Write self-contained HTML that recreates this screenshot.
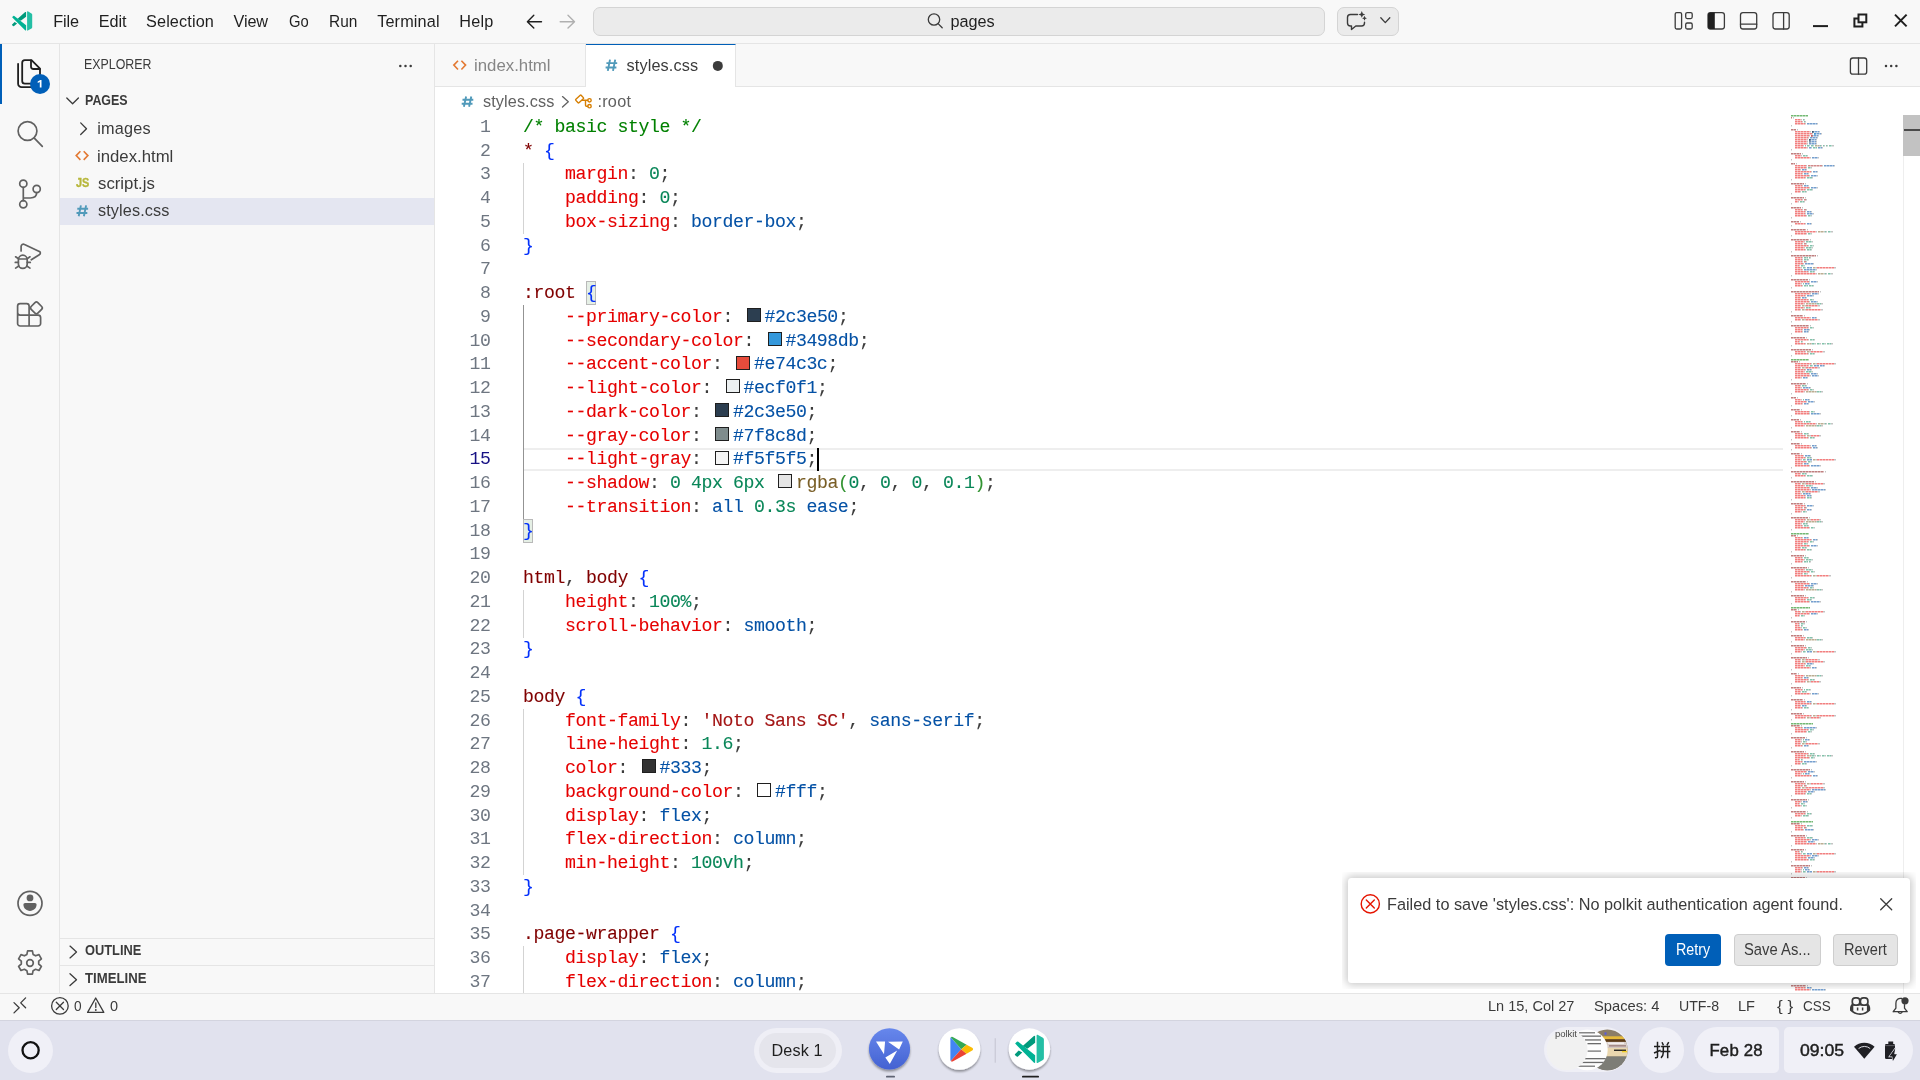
<!DOCTYPE html>
<html><head><meta charset="utf-8"><title>styles.css - pages</title>
<style>
*{margin:0;padding:0;box-sizing:border-box}
html,body{width:1920px;height:1080px;overflow:hidden;background:#fff;font-family:"Liberation Sans",sans-serif}
body{position:relative}
.abs,.t,.ln,.cl,.ig,#ico,.mm{position:absolute}
.t{white-space:pre;line-height:20px;height:20px;transform-origin:0 0}
.lay{left:0;top:0;width:1920px;height:1080px;will-change:transform}
#titlebar{left:0;top:0;width:1920px;height:44px;background:#f8f8f8;border-bottom:1px solid #e5e5e5}
#activity{left:0;top:44px;width:60px;height:949px;background:#f8f8f8;border-right:1px solid #e5e5e5}
#sidebar{left:60px;top:44px;width:375px;height:949px;background:#f8f8f8;border-right:1px solid #e5e5e5}
#tabs{left:435px;top:44px;width:1485px;height:43px;background:#f8f8f8;border-bottom:1px solid #e5e5e5}
#tab1{left:435px;top:44px;width:151px;height:42px;background:#f8f8f8;border-right:1px solid #e5e5e5}
#tab2{left:586px;top:44px;width:150px;height:43px;background:#fff;border-top:1px solid #005fb8;border-right:1px solid #e5e5e5}
#status{left:0;top:993px;width:1920px;height:27px;background:#f8f8f8;border-top:1px solid #e5e5e5}
#shelf{left:0;top:1020px;width:1920px;height:60px;background:#e1e2ee;border-top:1px solid #d3d4df}
#cc{left:593px;top:7px;width:732px;height:29px;background:#ebebeb;border:1px solid #d4d4d4;border-radius:7px}
#cp{left:1337px;top:7px;width:62px;height:29px;background:#ebebeb;border:1px solid #d4d4d4;border-radius:7px}
#sel{left:60px;top:198px;width:374px;height:27px;background:#e4e6f1}
.hr{background:#e5e5e5;height:1px}
.ln{left:435px;width:55.4px;text-align:right;font:18.2px/23.75px "Liberation Mono",monospace;letter-spacing:-0.42px;color:#6e7681;height:23.75px}
.ln.cur{color:#171184}
.cl{left:523px;white-space:pre;font:18.2px/23.75px "Liberation Mono",monospace;letter-spacing:-0.42px;color:#3b3b3b;height:23.75px;-webkit-text-stroke:0.1px}
.cb{display:inline-block;width:14px;height:14px;margin:0 3.5px 0 3.5px;border:1.5px solid #1f1f1f;vertical-align:-0.3px}
.ig{left:523px;width:1px;background:#d3d3d3}
.ig.act{background:#939393}
#curline{left:524px;top:448px;width:1259px;height:23px;border-top:2px solid #eeeeee;border-bottom:2px solid #eeeeee}
#cursor{left:817px;top:448px;width:2px;height:23px;background:#000}
.bm{background:rgba(0,100,0,.1);border:1px solid #b9b9b9;width:10px}
.mm{left:1791px;top:115px}
#sbtrack{left:1903px;top:115px;width:17px;height:878px;border-left:1px solid #eeeeee}
#sbthumb{left:1903px;top:115px;width:17px;height:40.5px;background:#c2c2c2}
#sbmark{left:1904px;top:129px;width:16px;height:2px;background:#4a4a4a}
#nwrap{left:1342px;top:872px;width:574px;height:117px;overflow:hidden}
#notif{left:5.8px;top:6px;width:562.7px;height:105.3px;background:#fff;border-radius:3.5px;box-shadow:0 0 9px 2px rgba(0,0,0,.22)}
.btn{height:32px;border-radius:4px}
</style></head><body>
<div class="abs" id="titlebar"></div>
<div class="abs" id="cc"></div><div class="abs" id="cp"></div>
<div class="abs" id="activity"></div>
<div class="abs" style="left:0;top:44px;width:2px;height:60px;background:#005fb8"></div>
<div class="abs" id="sidebar"></div>
<div class="abs" id="sel"></div>
<div class="abs hr" style="left:60px;top:938px;width:374px"></div>
<div class="abs hr" style="left:60px;top:965px;width:374px"></div>
<div class="abs" id="tabs"></div><div class="abs" id="tab1"></div><div class="abs" id="tab2"></div>
<!-- editor -->
<div class="abs" id="curline"></div>
<div class="abs bm" style="left:586px;top:281px;height:24px"></div>
<div class="abs bm" style="left:523px;top:518.5px;height:24px"></div>
<div class="ig" style="top:162.50px;height:71.25px"></div>
<div class="ig act" style="top:305.00px;height:213.75px"></div>
<div class="ig" style="top:590.00px;height:47.50px"></div>
<div class="ig" style="top:708.75px;height:166.25px"></div>
<div class="ig" style="top:946.25px;height:47.50px"></div>
<div class="abs lay"><div class="ln" style="top:115.75px">1</div><div class="cl" style="top:115.75px"><span style="color:#008000">/* basic style */</span></div>
<div class="ln" style="top:139.50px">2</div><div class="cl" style="top:139.50px"><span style="color:#800000">*</span> <span style="color:#0431fa">{</span></div>
<div class="ln" style="top:163.25px">3</div><div class="cl" style="top:163.25px">    <span style="color:#e50000">margin</span><span style="color:#3b3b3b">:</span> <span style="color:#098658">0</span><span style="color:#3b3b3b">;</span></div>
<div class="ln" style="top:187.00px">4</div><div class="cl" style="top:187.00px">    <span style="color:#e50000">padding</span><span style="color:#3b3b3b">:</span> <span style="color:#098658">0</span><span style="color:#3b3b3b">;</span></div>
<div class="ln" style="top:210.75px">5</div><div class="cl" style="top:210.75px">    <span style="color:#e50000">box-sizing</span><span style="color:#3b3b3b">:</span> <span style="color:#0451a5">border-box</span><span style="color:#3b3b3b">;</span></div>
<div class="ln" style="top:234.50px">6</div><div class="cl" style="top:234.50px"><span style="color:#0431fa">}</span></div>
<div class="ln" style="top:258.25px">7</div><div class="cl" style="top:258.25px"></div>
<div class="ln" style="top:282.00px">8</div><div class="cl" style="top:282.00px"><span style="color:#800000">:root</span> <span style="color:#0431fa">{</span></div>
<div class="ln" style="top:305.75px">9</div><div class="cl" style="top:305.75px">    <span style="color:#e50000">--primary-color</span><span style="color:#3b3b3b">:</span> <i class="cb" style="background:#2c3e50"></i><span style="color:#0451a5">#2c3e50</span><span style="color:#3b3b3b">;</span></div>
<div class="ln" style="top:329.50px">10</div><div class="cl" style="top:329.50px">    <span style="color:#e50000">--secondary-color</span><span style="color:#3b3b3b">:</span> <i class="cb" style="background:#3498db"></i><span style="color:#0451a5">#3498db</span><span style="color:#3b3b3b">;</span></div>
<div class="ln" style="top:353.25px">11</div><div class="cl" style="top:353.25px">    <span style="color:#e50000">--accent-color</span><span style="color:#3b3b3b">:</span> <i class="cb" style="background:#e74c3c"></i><span style="color:#0451a5">#e74c3c</span><span style="color:#3b3b3b">;</span></div>
<div class="ln" style="top:377.00px">12</div><div class="cl" style="top:377.00px">    <span style="color:#e50000">--light-color</span><span style="color:#3b3b3b">:</span> <i class="cb" style="background:#ecf0f1"></i><span style="color:#0451a5">#ecf0f1</span><span style="color:#3b3b3b">;</span></div>
<div class="ln" style="top:400.75px">13</div><div class="cl" style="top:400.75px">    <span style="color:#e50000">--dark-color</span><span style="color:#3b3b3b">:</span> <i class="cb" style="background:#2c3e50"></i><span style="color:#0451a5">#2c3e50</span><span style="color:#3b3b3b">;</span></div>
<div class="ln" style="top:424.50px">14</div><div class="cl" style="top:424.50px">    <span style="color:#e50000">--gray-color</span><span style="color:#3b3b3b">:</span> <i class="cb" style="background:#7f8c8d"></i><span style="color:#0451a5">#7f8c8d</span><span style="color:#3b3b3b">;</span></div>
<div class="ln cur" style="top:448.25px">15</div><div class="cl" style="top:448.25px">    <span style="color:#e50000">--light-gray</span><span style="color:#3b3b3b">:</span> <i class="cb" style="background:#f5f5f5"></i><span style="color:#0451a5">#f5f5f5</span><span style="color:#3b3b3b">;</span></div>
<div class="ln" style="top:472.00px">16</div><div class="cl" style="top:472.00px">    <span style="color:#e50000">--shadow</span><span style="color:#3b3b3b">:</span> <span style="color:#098658">0</span> <span style="color:#098658">4px</span> <span style="color:#098658">6px</span> <i class="cb" style="background:rgba(0,0,0,0.1)"></i><span style="color:#795e26">rgba</span><span style="color:#319331">(</span><span style="color:#098658">0</span><span style="color:#3b3b3b">,</span> <span style="color:#098658">0</span><span style="color:#3b3b3b">,</span> <span style="color:#098658">0</span><span style="color:#3b3b3b">,</span> <span style="color:#098658">0.1</span><span style="color:#319331">)</span><span style="color:#3b3b3b">;</span></div>
<div class="ln" style="top:495.75px">17</div><div class="cl" style="top:495.75px">    <span style="color:#e50000">--transition</span><span style="color:#3b3b3b">:</span> <span style="color:#0451a5">all</span> <span style="color:#098658">0.3s</span> <span style="color:#0451a5">ease</span><span style="color:#3b3b3b">;</span></div>
<div class="ln" style="top:519.50px">18</div><div class="cl" style="top:519.50px"><span style="color:#0431fa">}</span></div>
<div class="ln" style="top:543.25px">19</div><div class="cl" style="top:543.25px"></div>
<div class="ln" style="top:567.00px">20</div><div class="cl" style="top:567.00px"><span style="color:#800000">html</span><span style="color:#3b3b3b">,</span> <span style="color:#800000">body</span> <span style="color:#0431fa">{</span></div>
<div class="ln" style="top:590.75px">21</div><div class="cl" style="top:590.75px">    <span style="color:#e50000">height</span><span style="color:#3b3b3b">:</span> <span style="color:#098658">100%</span><span style="color:#3b3b3b">;</span></div>
<div class="ln" style="top:614.50px">22</div><div class="cl" style="top:614.50px">    <span style="color:#e50000">scroll-behavior</span><span style="color:#3b3b3b">:</span> <span style="color:#0451a5">smooth</span><span style="color:#3b3b3b">;</span></div>
<div class="ln" style="top:638.25px">23</div><div class="cl" style="top:638.25px"><span style="color:#0431fa">}</span></div>
<div class="ln" style="top:662.00px">24</div><div class="cl" style="top:662.00px"></div>
<div class="ln" style="top:685.75px">25</div><div class="cl" style="top:685.75px"><span style="color:#800000">body</span> <span style="color:#0431fa">{</span></div>
<div class="ln" style="top:709.50px">26</div><div class="cl" style="top:709.50px">    <span style="color:#e50000">font-family</span><span style="color:#3b3b3b">:</span> <span style="color:#a31515">&#x27;Noto Sans SC&#x27;</span><span style="color:#3b3b3b">,</span> <span style="color:#0451a5">sans-serif</span><span style="color:#3b3b3b">;</span></div>
<div class="ln" style="top:733.25px">27</div><div class="cl" style="top:733.25px">    <span style="color:#e50000">line-height</span><span style="color:#3b3b3b">:</span> <span style="color:#098658">1.6</span><span style="color:#3b3b3b">;</span></div>
<div class="ln" style="top:757.00px">28</div><div class="cl" style="top:757.00px">    <span style="color:#e50000">color</span><span style="color:#3b3b3b">:</span> <i class="cb" style="background:#333"></i><span style="color:#0451a5">#333</span><span style="color:#3b3b3b">;</span></div>
<div class="ln" style="top:780.75px">29</div><div class="cl" style="top:780.75px">    <span style="color:#e50000">background-color</span><span style="color:#3b3b3b">:</span> <i class="cb" style="background:#fff"></i><span style="color:#0451a5">#fff</span><span style="color:#3b3b3b">;</span></div>
<div class="ln" style="top:804.50px">30</div><div class="cl" style="top:804.50px">    <span style="color:#e50000">display</span><span style="color:#3b3b3b">:</span> <span style="color:#0451a5">flex</span><span style="color:#3b3b3b">;</span></div>
<div class="ln" style="top:828.25px">31</div><div class="cl" style="top:828.25px">    <span style="color:#e50000">flex-direction</span><span style="color:#3b3b3b">:</span> <span style="color:#0451a5">column</span><span style="color:#3b3b3b">;</span></div>
<div class="ln" style="top:852.00px">32</div><div class="cl" style="top:852.00px">    <span style="color:#e50000">min-height</span><span style="color:#3b3b3b">:</span> <span style="color:#098658">100vh</span><span style="color:#3b3b3b">;</span></div>
<div class="ln" style="top:875.75px">33</div><div class="cl" style="top:875.75px"><span style="color:#0431fa">}</span></div>
<div class="ln" style="top:899.50px">34</div><div class="cl" style="top:899.50px"></div>
<div class="ln" style="top:923.25px">35</div><div class="cl" style="top:923.25px"><span style="color:#800000">.page-wrapper</span> <span style="color:#0431fa">{</span></div>
<div class="ln" style="top:947.00px">36</div><div class="cl" style="top:947.00px">    <span style="color:#e50000">display</span><span style="color:#3b3b3b">:</span> <span style="color:#0451a5">flex</span><span style="color:#3b3b3b">;</span></div>
<div class="ln" style="top:970.75px">37</div><div class="cl" style="top:970.75px">    <span style="color:#e50000">flex-direction</span><span style="color:#3b3b3b">:</span> <span style="color:#0451a5">column</span><span style="color:#3b3b3b">;</span></div></div>
<div class="abs" id="cursor"></div>
<svg class="mm" width="120" height="876" viewBox="0 0 120 876"><path d="M0 0.75h17M0 244.75h18M0 418.75h18M0 492.75h19M0 608.75h22M0 706.75h22M0 812.75h21" stroke="#008000" stroke-opacity="0.55" stroke-width="1.5" stroke-dasharray="2.6 0.4" fill="none"/><path d="M0 2.75h1M0 14.75h5M0 38.75h10M0 48.75h4M0 68.75h13M0 82.75h13M0 92.75h10M0 106.75h8M0 114.75h15M0 124.75h18M0 140.75h25M0 164.75h17M0 176.75h28M0 200.75h12M0 210.75h18M0 222.75h14M0 234.75h20M0 246.75h7M0 268.75h15M0 282.75h5M0 294.75h9M0 304.75h8M0 316.75h9M0 328.75h9M0 338.75h9M0 356.75h33M0 366.75h23M0 388.75h12M0 402.75h17M0 420.75h5M0 440.75h13M0 452.75h16M0 466.75h15M0 480.75h13M0 494.75h6M0 506.75h14M0 520.75h11M0 530.75h13M0 542.75h16M0 558.75h6M0 572.75h10M0 584.75h12M0 598.75h11M0 610.75h9M0 622.75h14M0 636.75h13M0 654.75h19M0 666.75h13M0 684.75h16M0 696.75h15M0 708.75h9M0 720.75h14M0 734.75h13M0 750.75h19M0 762.75h14M0 776.75h13M0 786.75h16M0 798.75h14M0 814.75h8M0 830.75h16M0 844.75h13M0 856.75h13M0 870.75h15" stroke="#800000" stroke-opacity="0.5" stroke-width="1.5" stroke-dasharray="2.6 0.4" fill="none"/><path d="M2 2.75h1M10 4.75h1M13 4.75h1M11 6.75h1M14 6.75h1M14 8.75h1M26 8.75h1M0 10.75h1M6 14.75h1M19 16.75h1M28 16.75h1M21 18.75h1M30 18.75h1M18 20.75h1M27 20.75h1M17 22.75h1M26 22.75h1M16 24.75h1M25 24.75h1M16 26.75h1M25 26.75h1M16 28.75h1M25 28.75h1M12 30.75h1M28 30.75h1M30 30.75h1M33 30.75h1M36 30.75h1M41 30.75h1M42 30.75h1M16 32.75h1M31 32.75h1M0 34.75h1M11 38.75h1M10 40.75h1M16 40.75h1M19 42.75h1M27 42.75h1M0 44.75h1M5 48.75h1M15 50.75h1M31 50.75h1M43 50.75h1M15 52.75h1M20 52.75h1M9 54.75h1M15 54.75h1M20 56.75h1M26 56.75h1M11 58.75h1M17 58.75h1M18 60.75h1M26 60.75h1M14 62.75h1M21 62.75h1M0 64.75h1M14 68.75h1M11 70.75h1M17 70.75h1M18 72.75h1M26 72.75h1M14 74.75h1M21 74.75h1M9 76.75h1M15 76.75h1M0 78.75h1M14 82.75h1M11 84.75h1M15 84.75h1M7 86.75h1M13 86.75h1M0 88.75h1M11 92.75h1M11 94.75h1M15 94.75h1M14 96.75h1M20 96.75h1M14 98.75h1M22 98.75h1M15 100.75h1M20 100.75h1M0 102.75h1M9 106.75h1M14 108.75h1M20 108.75h1M0 110.75h1M16 114.75h1M25 116.75h1M33 116.75h1M35 116.75h1M40 116.75h1M41 116.75h1M15 118.75h1M20 118.75h1M0 120.75h1M19 124.75h1M13 126.75h1M21 126.75h1M11 128.75h1M15 128.75h1M17 130.75h1M22 130.75h1M13 132.75h1M21 132.75h1M14 134.75h1M20 134.75h1M0 136.75h1M26 140.75h1M11 142.75h1M19 142.75h1M11 144.75h1M17 144.75h1M11 146.75h1M15 146.75h1M12 148.75h1M22 148.75h1M8 150.75h1M13 150.75h1M10 152.75h1M25 152.75h1M43 152.75h1M44 152.75h1M11 154.75h1M25 154.75h1M17 156.75h1M23 156.75h1M25 158.75h1M33 158.75h1M35 158.75h1M40 158.75h1M41 158.75h1M0 160.75h1M18 164.75h1M18 166.75h1M26 166.75h1M10 168.75h1M18 168.75h1M11 170.75h1M22 170.75h1M0 172.75h1M29 176.75h1M19 178.75h1M27 178.75h1M14 180.75h1M22 180.75h1M9 182.75h1M15 182.75h1M17 184.75h1M22 184.75h1M18 186.75h1M26 186.75h1M13 188.75h1M25 188.75h1M30 188.75h1M31 188.75h1M9 190.75h1M14 190.75h1M27 190.75h1M28 190.75h1M13 192.75h1M19 192.75h1M9 194.75h1M14 194.75h1M30 194.75h1M31 194.75h1M0 196.75h1M13 200.75h1M19 202.75h1M25 202.75h1M9 204.75h1M14 204.75h1M27 204.75h1M28 204.75h1M0 206.75h1M19 210.75h1M17 212.75h1M22 212.75h1M11 214.75h1M18 214.75h1M11 216.75h1M17 216.75h1M0 218.75h1M15 222.75h1M17 224.75h1M23 224.75h1M8 226.75h1M11 226.75h1M14 228.75h1M20 228.75h1M24 228.75h1M29 228.75h1M34 228.75h1M40 228.75h1M41 228.75h1M0 230.75h1M21 234.75h1M14 236.75h1M19 236.75h1M32 236.75h1M33 236.75h1M17 238.75h1M23 238.75h1M0 240.75h1M8 246.75h1M20 248.75h1M25 248.75h1M43 248.75h1M44 248.75h1M17 250.75h1M33 250.75h1M9 252.75h1M14 252.75h1M27 252.75h1M28 252.75h1M14 254.75h1M20 254.75h1M13 256.75h1M21 256.75h1M18 258.75h1M26 258.75h1M19 260.75h1M27 260.75h1M10 262.75h1M16 262.75h1M0 264.75h1M16 268.75h1M9 270.75h1M15 270.75h1M10 272.75h1M19 272.75h1M17 274.75h1M22 274.75h1M13 276.75h1M25 276.75h1M30 276.75h1M31 276.75h1M0 278.75h1M6 282.75h1M10 284.75h1M18 284.75h1M15 286.75h1M23 286.75h1M11 288.75h1M17 288.75h1M0 290.75h1M10 294.75h1M18 296.75h1M23 296.75h1M18 298.75h1M29 298.75h1M0 300.75h1M9 304.75h1M11 306.75h1M19 306.75h1M25 308.75h1M33 308.75h1M35 308.75h1M40 308.75h1M41 308.75h1M13 310.75h1M25 310.75h1M30 310.75h1M31 310.75h1M0 312.75h1M10 316.75h1M11 318.75h1M17 318.75h1M14 320.75h1M19 320.75h1M28 320.75h1M29 320.75h1M17 322.75h1M23 322.75h1M0 324.75h1M10 328.75h1M19 330.75h1M25 330.75h1M20 332.75h1M26 332.75h1M0 334.75h1M10 338.75h1M12 340.75h1M19 340.75h1M14 342.75h1M20 342.75h1M10 344.75h1M25 344.75h1M43 344.75h1M44 344.75h1M15 346.75h1M20 346.75h1M11 348.75h1M17 348.75h1M18 350.75h1M29 350.75h1M0 352.75h1M34 356.75h1M9 358.75h1M15 358.75h1M14 360.75h1M21 360.75h1M0 362.75h1M24 366.75h1M9 368.75h1M14 368.75h1M32 368.75h1M33 368.75h1M13 370.75h1M21 370.75h1M18 372.75h1M26 372.75h1M19 374.75h1M34 374.75h1M9 376.75h1M14 376.75h1M27 376.75h1M28 376.75h1M10 378.75h1M19 378.75h1M14 380.75h1M20 380.75h1M14 382.75h1M20 382.75h1M0 384.75h1M13 388.75h1M14 390.75h1M22 390.75h1M11 392.75h1M15 392.75h1M14 394.75h1M20 394.75h1M10 396.75h1M15 396.75h1M0 398.75h1M18 402.75h1M14 404.75h1M19 404.75h1M28 404.75h1M29 404.75h1M13 406.75h1M25 406.75h1M30 406.75h1M31 406.75h1M10 408.75h1M16 408.75h1M11 410.75h1M17 410.75h1M18 412.75h1M23 412.75h1M0 414.75h1M6 420.75h1M11 422.75h1M17 422.75h1M20 424.75h1M26 424.75h1M17 426.75h1M22 426.75h1M11 428.75h1M16 428.75h1M18 430.75h1M26 430.75h1M9 432.75h1M15 432.75h1M14 434.75h1M20 434.75h1M0 436.75h1M14 440.75h1M11 442.75h1M17 442.75h1M13 444.75h1M21 444.75h1M11 446.75h1M19 446.75h1M0 448.75h1M17 452.75h1M13 454.75h1M21 454.75h1M18 456.75h1M23 456.75h1M11 458.75h1M16 458.75h1M20 460.75h1M25 460.75h1M38 460.75h1M39 460.75h1M0 462.75h1M16 466.75h1M18 468.75h1M26 468.75h1M12 470.75h1M22 470.75h1M17 472.75h1M22 472.75h1M13 474.75h1M25 474.75h1M30 474.75h1M31 474.75h1M0 476.75h1M14 480.75h1M17 482.75h1M23 482.75h1M14 484.75h1M20 484.75h1M18 486.75h1M29 486.75h1M0 488.75h1M7 494.75h1M9 496.75h1M14 496.75h1M32 496.75h1M33 496.75h1M18 498.75h1M26 498.75h1M8 500.75h1M13 500.75h1M0 502.75h1M15 506.75h1M8 508.75h1M13 508.75h1M8 510.75h1M11 510.75h1M10 512.75h1M15 512.75h1M11 514.75h1M17 514.75h1M0 516.75h1M12 520.75h1M14 522.75h1M21 522.75h1M13 524.75h1M25 524.75h1M30 524.75h1M31 524.75h1M0 526.75h1M14 530.75h1M15 532.75h1M20 532.75h1M13 534.75h1M21 534.75h1M10 536.75h1M25 536.75h1M43 536.75h1M44 536.75h1M0 538.75h1M17 542.75h1M9 544.75h1M14 544.75h1M27 544.75h1M28 544.75h1M9 546.75h1M14 546.75h1M32 546.75h1M33 546.75h1M14 548.75h1M22 548.75h1M13 550.75h1M19 550.75h1M19 552.75h1M25 552.75h1M0 554.75h1M7 558.75h1M13 560.75h1M25 560.75h1M30 560.75h1M31 560.75h1M11 562.75h1M17 562.75h1M17 564.75h1M23 564.75h1M14 566.75h1M19 566.75h1M28 566.75h1M29 566.75h1M0 568.75h1M11 572.75h1M11 574.75h1M19 574.75h1M9 576.75h1M15 576.75h1M19 578.75h1M27 578.75h1M0 580.75h1M13 584.75h1M14 586.75h1M20 586.75h1M20 588.75h1M25 588.75h1M43 588.75h1M44 588.75h1M9 590.75h1M15 590.75h1M11 592.75h1M17 592.75h1M0 594.75h1M12 598.75h1M20 600.75h1M25 600.75h1M43 600.75h1M44 600.75h1M14 602.75h1M19 602.75h1M28 602.75h1M29 602.75h1M0 604.75h1M10 610.75h1M11 612.75h1M25 612.75h1M17 614.75h1M22 614.75h1M15 616.75h1M20 616.75h1M0 618.75h1M15 622.75h1M10 624.75h1M18 624.75h1M10 626.75h1M15 626.75h1M9 628.75h1M14 628.75h1M27 628.75h1M28 628.75h1M11 630.75h1M17 630.75h1M0 632.75h1M14 636.75h1M17 638.75h1M23 638.75h1M14 640.75h1M20 640.75h1M24 640.75h1M29 640.75h1M34 640.75h1M40 640.75h1M41 640.75h1M18 642.75h1M23 642.75h1M8 644.75h1M11 644.75h1M11 646.75h1M25 646.75h1M9 648.75h1M15 648.75h1M0 650.75h1M20 654.75h1M15 656.75h1M23 656.75h1M10 658.75h1M18 658.75h1M20 660.75h1M26 660.75h1M0 662.75h1M14 666.75h1M14 668.75h1M19 668.75h1M32 668.75h1M33 668.75h1M11 670.75h1M15 670.75h1M9 672.75h1M14 672.75h1M32 672.75h1M33 672.75h1M19 674.75h1M34 674.75h1M15 676.75h1M23 676.75h1M14 678.75h1M20 678.75h1M0 680.75h1M17 684.75h1M10 686.75h1M16 686.75h1M8 688.75h1M13 688.75h1M10 690.75h1M15 690.75h1M0 692.75h1M16 696.75h1M14 698.75h1M20 698.75h1M10 700.75h1M17 700.75h1M0 702.75h1M10 708.75h1M14 710.75h1M21 710.75h1M11 712.75h1M15 712.75h1M12 714.75h1M22 714.75h1M0 716.75h1M15 720.75h1M14 722.75h1M21 722.75h1M19 724.75h1M27 724.75h1M15 726.75h1M23 726.75h1M25 728.75h1M33 728.75h1M35 728.75h1M40 728.75h1M41 728.75h1M0 730.75h1M14 734.75h1M8 736.75h1M11 736.75h1M10 738.75h1M25 738.75h1M43 738.75h1M44 738.75h1M19 740.75h1M27 740.75h1M15 742.75h1M23 742.75h1M17 744.75h1M23 744.75h1M0 746.75h1M20 750.75h1M11 752.75h1M17 752.75h1M10 754.75h1M18 754.75h1M10 756.75h1M25 756.75h1M43 756.75h1M44 756.75h1M0 758.75h1M15 762.75h1M17 764.75h1M33 764.75h1M14 766.75h1M21 766.75h1M17 768.75h1M23 768.75h1M11 770.75h1M15 770.75h1M0 772.75h1M14 776.75h1M8 778.75h1M13 778.75h1M11 780.75h1M19 780.75h1M0 782.75h1M17 786.75h1M10 788.75h1M15 788.75h1M12 790.75h1M19 790.75h1M8 792.75h1M11 792.75h1M0 794.75h1M15 798.75h1M17 800.75h1M23 800.75h1M25 802.75h1M33 802.75h1M35 802.75h1M40 802.75h1M41 802.75h1M17 804.75h1M23 804.75h1M14 806.75h1M19 806.75h1M28 806.75h1M29 806.75h1M0 808.75h1M9 814.75h1M19 816.75h1M34 816.75h1M11 818.75h1M18 818.75h1M18 820.75h1M26 820.75h1M13 822.75h1M25 822.75h1M30 822.75h1M31 822.75h1M17 824.75h1M23 824.75h1M0 826.75h1M17 830.75h1M17 832.75h1M23 832.75h1M14 834.75h1M20 834.75h1M10 836.75h1M16 836.75h1M20 838.75h1M25 838.75h1M43 838.75h1M44 838.75h1M0 840.75h1M14 844.75h1M14 846.75h1M19 846.75h1M28 846.75h1M29 846.75h1M12 848.75h1M22 848.75h1M13 850.75h1M25 850.75h1M30 850.75h1M31 850.75h1M0 852.75h1M14 856.75h1M8 858.75h1M11 858.75h1M11 860.75h1M16 860.75h1M7 862.75h1M13 862.75h1M17 864.75h1M23 864.75h1M0 866.75h1M16 870.75h1M14 872.75h1M20 872.75h1M19 874.75h1M34 874.75h1" stroke="#3b3b3b" stroke-opacity="0.3" stroke-width="1.5" stroke-dasharray="2.6 0.4" fill="none"/><path d="M4 4.75h6M4 6.75h7M4 8.75h10M4 16.75h15M4 18.75h17M4 20.75h14M4 22.75h13M4 24.75h12M4 26.75h12M4 28.75h12M4 30.75h8M4 32.75h12M4 40.75h6M4 42.75h15M4 50.75h11M4 52.75h11M4 54.75h5M4 56.75h16M4 58.75h7M4 60.75h14M4 62.75h10M4 70.75h7M4 72.75h14M4 74.75h10M4 76.75h5M4 84.75h7M4 86.75h3M4 94.75h7M4 96.75h10M4 98.75h10M4 100.75h11M4 108.75h10M4 116.75h21M4 118.75h11M4 126.75h9M4 128.75h7M4 130.75h13M4 132.75h9M4 134.75h10M4 142.75h7M4 144.75h7M4 146.75h7M4 148.75h8M4 150.75h4M4 152.75h6M26 152.75h17M4 154.75h7M4 156.75h13M4 158.75h21M4 166.75h14M4 168.75h6M4 170.75h7M4 178.75h15M4 180.75h10M4 182.75h5M4 184.75h13M4 186.75h14M4 188.75h9M4 190.75h5M15 190.75h12M4 192.75h9M4 194.75h5M15 194.75h15M4 202.75h15M4 204.75h5M15 204.75h12M4 212.75h13M4 214.75h7M4 216.75h7M4 224.75h13M4 226.75h4M4 228.75h10M4 236.75h10M20 236.75h12M4 238.75h13M4 248.75h16M26 248.75h17M4 250.75h13M4 252.75h5M15 252.75h12M4 254.75h10M4 256.75h9M4 258.75h14M4 260.75h15M4 262.75h6M4 270.75h5M4 272.75h6M4 274.75h13M4 276.75h9M4 284.75h6M4 286.75h11M4 288.75h7M4 296.75h14M4 298.75h14M4 306.75h7M4 308.75h21M4 310.75h9M4 318.75h7M4 320.75h10M20 320.75h8M4 322.75h13M4 330.75h15M4 332.75h16M4 340.75h8M4 342.75h10M4 344.75h6M26 344.75h17M4 346.75h11M4 348.75h7M4 350.75h14M4 358.75h5M4 360.75h10M4 368.75h5M15 368.75h17M4 370.75h9M4 372.75h14M4 374.75h15M4 376.75h5M15 376.75h12M4 378.75h6M4 380.75h10M4 382.75h10M4 390.75h10M4 392.75h7M4 394.75h10M4 396.75h6M4 404.75h10M20 404.75h8M4 406.75h9M4 408.75h6M4 410.75h7M4 412.75h14M4 422.75h7M4 424.75h16M4 426.75h13M4 428.75h7M4 430.75h14M4 432.75h5M4 434.75h10M4 442.75h7M4 444.75h9M4 446.75h7M4 454.75h9M4 456.75h14M4 458.75h7M4 460.75h16M26 460.75h12M4 468.75h14M4 470.75h8M4 472.75h13M4 474.75h9M4 482.75h13M4 484.75h10M4 486.75h14M4 496.75h5M15 496.75h17M4 498.75h14M4 500.75h4M4 508.75h4M4 510.75h4M4 512.75h6M4 514.75h7M4 522.75h10M4 524.75h9M4 532.75h11M4 534.75h9M4 536.75h6M26 536.75h17M4 544.75h5M15 544.75h12M4 546.75h5M15 546.75h17M4 548.75h10M4 550.75h9M4 552.75h15M4 560.75h9M4 562.75h7M4 564.75h13M4 566.75h10M20 566.75h8M4 574.75h7M4 576.75h5M4 578.75h15M4 586.75h10M4 588.75h16M26 588.75h17M4 590.75h5M4 592.75h7M4 600.75h16M26 600.75h17M4 602.75h10M20 602.75h8M4 612.75h7M4 614.75h13M4 616.75h11M4 624.75h6M4 626.75h6M4 628.75h5M15 628.75h12M4 630.75h7M4 638.75h13M4 640.75h10M4 642.75h14M4 644.75h4M4 646.75h7M4 648.75h5M4 656.75h11M4 658.75h6M4 660.75h16M4 668.75h10M20 668.75h12M4 670.75h7M4 672.75h5M15 672.75h17M4 674.75h15M4 676.75h11M4 678.75h10M4 686.75h6M4 688.75h4M4 690.75h6M4 698.75h10M4 700.75h6M4 710.75h10M4 712.75h7M4 714.75h8M4 722.75h10M4 724.75h15M4 726.75h11M4 728.75h21M4 736.75h4M4 738.75h6M26 738.75h17M4 740.75h15M4 742.75h11M4 744.75h13M4 752.75h7M4 754.75h6M4 756.75h6M26 756.75h17M4 764.75h13M4 766.75h10M4 768.75h13M4 770.75h7M4 778.75h4M4 780.75h7M4 788.75h6M4 790.75h8M4 792.75h4M4 800.75h13M4 802.75h21M4 804.75h13M4 806.75h10M20 806.75h8M4 816.75h15M4 818.75h7M4 820.75h14M4 822.75h9M4 824.75h13M4 832.75h13M4 834.75h10M4 836.75h6M4 838.75h16M26 838.75h17M4 846.75h10M20 846.75h8M4 848.75h8M4 850.75h9M4 858.75h4M4 860.75h7M4 862.75h3M4 864.75h13M4 872.75h10M4 874.75h15" stroke="#e50000" stroke-opacity="0.5" stroke-width="1.5" stroke-dasharray="2.6 0.4" fill="none"/><path d="M12 4.75h1M13 6.75h1M14 30.75h1M16 30.75h3M20 30.75h3M29 30.75h1M32 30.75h1M35 30.75h1M38 30.75h3M22 32.75h4M12 40.75h4M17 52.75h3M16 62.75h5M16 74.75h5M11 76.75h4M9 86.75h4M17 100.75h3M34 116.75h1M37 116.75h3M17 118.75h3M15 126.75h6M19 130.75h3M15 132.75h6M16 134.75h4M13 142.75h4M18 142.75h1M13 144.75h4M10 150.75h3M12 152.75h3M19 156.75h4M34 158.75h1M37 158.75h3M12 168.75h1M13 170.75h4M18 170.75h4M19 184.75h3M26 188.75h4M15 192.75h4M19 212.75h3M19 224.75h4M10 226.75h1M21 228.75h3M26 228.75h3M31 228.75h3M36 228.75h4M19 238.75h4M19 250.75h3M15 256.75h6M11 270.75h4M19 274.75h3M26 276.75h4M12 284.75h1M20 296.75h3M13 306.75h1M15 306.75h4M34 308.75h1M37 308.75h3M26 310.75h4M13 318.75h4M19 322.75h4M16 342.75h4M12 344.75h3M17 346.75h3M11 358.75h4M16 360.75h5M15 370.75h6M16 382.75h4M12 396.75h3M26 406.75h4M12 408.75h4M13 410.75h4M20 412.75h3M19 426.75h3M13 428.75h3M11 432.75h4M16 434.75h4M13 442.75h4M15 444.75h6M13 446.75h4M18 446.75h1M15 454.75h6M20 456.75h3M13 458.75h3M19 472.75h3M26 474.75h4M19 482.75h4M16 484.75h4M10 500.75h3M10 508.75h3M10 510.75h1M12 512.75h3M16 522.75h5M26 524.75h4M17 532.75h3M15 534.75h6M12 536.75h3M15 550.75h4M26 560.75h4M19 564.75h4M13 574.75h1M15 574.75h4M11 576.75h4M13 592.75h4M19 614.75h3M17 616.75h3M12 624.75h1M12 626.75h3M19 638.75h4M21 640.75h3M26 640.75h3M31 640.75h3M36 640.75h4M20 642.75h3M10 644.75h1M11 648.75h4M12 658.75h1M16 678.75h4M10 688.75h3M12 690.75h3M16 698.75h4M12 700.75h5M16 710.75h5M16 722.75h5M34 728.75h1M37 728.75h3M10 736.75h1M12 738.75h3M19 744.75h4M12 754.75h1M12 756.75h3M19 764.75h3M16 766.75h5M19 768.75h4M10 778.75h3M13 780.75h4M18 780.75h1M12 788.75h3M10 792.75h1M19 800.75h4M34 802.75h1M37 802.75h3M19 804.75h4M26 822.75h4M19 824.75h4M19 832.75h4M16 834.75h4M12 836.75h4M26 850.75h4M10 858.75h1M13 860.75h3M9 862.75h4M19 864.75h4" stroke="#098658" stroke-opacity="0.5" stroke-width="1.5" stroke-dasharray="2.6 0.4" fill="none"/><path d="M16 8.75h10M21 16.75h7M23 18.75h7M20 20.75h7M19 22.75h7M18 24.75h7M18 26.75h7M18 28.75h7M18 32.75h3M27 32.75h4M21 42.75h6M33 50.75h10M11 54.75h4M22 56.75h4M13 58.75h4M20 60.75h6M13 70.75h4M20 72.75h6M16 96.75h4M16 98.75h6M16 108.75h4M14 148.75h8M16 152.75h5M13 154.75h12M20 166.75h6M14 168.75h4M21 178.75h6M16 180.75h6M11 182.75h4M20 186.75h6M21 202.75h4M13 214.75h5M13 216.75h4M23 250.75h5M29 250.75h4M16 254.75h4M20 258.75h6M21 260.75h6M12 262.75h4M12 272.75h7M14 284.75h4M17 286.75h6M13 288.75h4M20 298.75h9M21 330.75h4M22 332.75h4M14 340.75h5M16 344.75h5M13 348.75h4M20 350.75h9M20 372.75h6M21 374.75h13M12 378.75h7M16 380.75h4M16 390.75h6M16 394.75h4M13 422.75h4M22 424.75h4M20 430.75h6M20 468.75h6M14 470.75h8M20 486.75h9M20 498.75h6M13 514.75h4M16 536.75h5M16 548.75h6M21 552.75h4M13 562.75h4M21 578.75h6M16 586.75h4M11 590.75h4M13 612.75h12M14 624.75h4M13 630.75h4M13 646.75h12M17 656.75h6M14 658.75h4M22 660.75h4M21 674.75h13M17 676.75h6M12 686.75h4M14 714.75h8M21 724.75h6M17 726.75h6M16 738.75h5M21 740.75h6M17 742.75h6M13 752.75h4M14 754.75h4M16 756.75h5M23 764.75h5M29 764.75h4M14 790.75h5M21 816.75h13M13 818.75h5M20 820.75h6M14 848.75h8M16 872.75h4M21 874.75h13" stroke="#0451a5" stroke-opacity="0.55" stroke-width="1.5" stroke-dasharray="2.6 0.4" fill="none"/><path d="M24 30.75h4M27 116.75h6M22 152.75h3M27 158.75h6M15 188.75h10M11 190.75h3M11 194.75h3M11 204.75h3M16 228.75h4M16 236.75h3M22 248.75h3M11 252.75h3M15 276.75h10M27 308.75h6M15 310.75h10M16 320.75h3M22 344.75h3M11 368.75h3M11 376.75h3M16 404.75h3M15 406.75h10M22 460.75h3M15 474.75h10M11 496.75h3M15 524.75h10M22 536.75h3M11 544.75h3M11 546.75h3M15 560.75h10M16 566.75h3M22 588.75h3M22 600.75h3M16 602.75h3M11 628.75h3M16 640.75h4M16 668.75h3M11 672.75h3M27 728.75h6M22 738.75h3M22 756.75h3M27 802.75h6M16 806.75h3M15 822.75h10M22 838.75h3M16 846.75h3M15 850.75h10" stroke="#795e26" stroke-opacity="0.5" stroke-width="1.5" stroke-dasharray="2.6 0.4" fill="none"/><path d="M17 50.75h14M13 84.75h2M13 94.75h2M13 128.75h2M13 146.75h2M13 392.75h2M13 670.75h2M13 712.75h2M13 770.75h2" stroke="#a31515" stroke-opacity="0.5" stroke-width="1.5" stroke-dasharray="2.6 0.4" fill="none"/><rect x="21" y="16" width="1.6" height="1.8" fill="#2c3e50" fill-opacity=".8"/><rect x="23" y="18" width="1.6" height="1.8" fill="#3498db" fill-opacity=".8"/><rect x="20" y="20" width="1.6" height="1.8" fill="#e74c3c" fill-opacity=".8"/><rect x="18" y="24" width="1.6" height="1.8" fill="#2c3e50" fill-opacity=".8"/><rect x="18" y="26" width="1.6" height="1.8" fill="#7f8c8d" fill-opacity=".8"/></svg>
<div class="abs" id="sbtrack"></div><div class="abs" id="sbthumb"></div><div class="abs" id="sbmark"></div>
<div class="abs" id="status"></div>
<div class="abs" id="nwrap"><div class="abs" id="notif"></div></div>
<div class="abs btn" style="left:1665px;top:934px;width:56px;background:#005fb8"></div>
<div class="abs btn" style="left:1734px;top:934px;width:87px;background:#e5e5e5;border:1px solid #cecece"></div>
<div class="abs btn" style="left:1833px;top:934px;width:65px;background:#e5e5e5;border:1px solid #cecece"></div>
<div class="abs" id="shelf"></div>
<!-- shelf items -->
<div class="abs" style="left:8px;top:1028px;width:45px;height:45px;border-radius:50%;background:#f0f0f7"></div>
<div class="abs" style="left:754px;top:1028px;width:88px;height:45px;border-radius:23px;background:#efeff6"></div>
<div class="abs" style="left:759px;top:1033px;width:77px;height:35px;border-radius:18px;background:#e5e5ec"></div>
<div class="abs" style="left:1543.7px;top:1027.3px;width:84.3px;height:45px;border-radius:22.5px;background:#efeff6"></div>
<div class="abs" style="left:1639px;top:1027.3px;width:45.4px;height:45.4px;border-radius:50%;background:#f0f0f7"></div>
<div class="abs" style="left:1694.3px;top:1027.3px;width:84.800px;height:45.400px;border-radius:23px 5px 5px 23px;background:#f0f0f7"></div>
<div class="abs" style="left:1783.8px;top:1027.3px;width:129.300px;height:45.400px;border-radius:5px 23px 23px 5px;background:#f0f0f7"></div>
<svg id="ico" width="1920" height="1080" viewBox="0 0 1920 1080" fill="none" stroke-linecap="round" stroke-linejoin="round">
<!-- vscode logo title -->
<g stroke="none">
<path fill="#009a7c" d="M17.400 18.900L25.200 12.100a.6.600 0 0 1 .9.200L26.100 16.800L20.700 20.800zM12.100 24.400L14.600 22L17.100 23.400L14.100 26.100a.700.700 0 0 1-.9 0L12.100 25.200a.550.550 0 0 1 0-.8z"/>
<path fill="#00b294" d="M12.100 17.300L13.300 16.100a.800.800 0 0 1 1-.100L26.100 25.200V30a.500.500 0 0 1-.8.400z"/>
<path fill="#24bfa5" d="M27.100 11.800a.500.500 0 0 1 .7-.450L31.500 13.400a1.300 1.300 0 0 1 .7 1.150V27.350a1.300 1.300 0 0 1-.7 1.150L27.800 30.550a.500.500 0 0 1-.700-.450z"/>
</g>
<!-- nav arrows -->
<g stroke="#1f1f1f" stroke-width="1.4"><path d="M541.5 21.7H527.6M533.8 15.3L527.4 21.7L533.8 28.1"/></g>
<g stroke="#b0b0b0" stroke-width="1.4"><path d="M560.2 21.7H574.3M568 15.3L574.5 21.7L568 28.1"/></g>
<!-- search in command center -->
<g stroke="#3b3b3b" stroke-width="1.3"><circle cx="934" cy="19.500" r="5.700"/><path d="M938.100 23.600L942.200 27.800"/></g>
<!-- copilot chat icon -->
<g stroke="#3b3b3b" stroke-width="1.4"><path d="M1357.5 14.5H1350.5a3 3 0 0 0-3 3V23a3 3 0 0 0 3 3h1v3.5l4.3-3.5h5.7a3 3 0 0 0 3-3v-0.8"/></g>
<g fill="#3b3b3b" stroke="none"><path d="M1361.800 11l1 2.400 2.400 1-2.400 1-1 2.400-1-2.400-2.400-1 2.400-1z"/><path d="M1364.500 15.800l.750 1.700 1.700.750-1.700.750-.750 1.700-.750-1.700-1.700-.750 1.700-.750z"/></g>
<g stroke="#3b3b3b" stroke-width="1.3"><path d="M1380.8 17.8L1385.3 22.6L1389.8 17.8"/></g>
<!-- layout icons -->
<g stroke="#3b3b3b" stroke-width="1.3">
<rect x="1675.2" y="12.6" width="6.4" height="16.4" rx="1.5"/><rect x="1685.7" y="12.6" width="6.5" height="6" rx="1.5"/><rect x="1685.7" y="23" width="6.5" height="6" rx="1.5"/>
<rect x="1708" y="12.6" width="16.4" height="16.4" rx="2.5"/>
<rect x="1740.5" y="12.6" width="16.2" height="16.4" rx="2.5"/><path d="M1740.5 24.2H1756.7"/>
<rect x="1773" y="12.6" width="16.2" height="16.4" rx="2.5"/><path d="M1783.6 12.6V29"/>
</g>
<path d="M1710.5 12.6H1714.8V29H1710.5a2.5 2.5 0 0 1-2.5-2.5V15.1a2.5 2.5 0 0 1 2.5-2.5z" fill="#1f1f1f" stroke="none"/>
<!-- window controls -->
<g stroke="#1f1f1f" stroke-width="2" stroke-linecap="butt" stroke-linejoin="miter"><path d="M1813 26.1H1828"/><rect x="1858.5" y="14.5" width="7.8" height="7.8"/><path d="M1858.5 18.5H1854.4V26.4H1862.4V22.3"/><path d="M1895 14.6L1906.6 26.4M1906.6 14.6L1895 26.4"/></g>
<!-- editor actions -->
<g stroke="#3b3b3b" stroke-width="1.3"><rect x="1850.4" y="58" width="16.3" height="16.2" rx="2.5"/><path d="M1858.5 58V74.2"/></g>
<g fill="#3b3b3b" stroke="none"><circle cx="1886" cy="66" r="1.25"/><circle cx="1891.2" cy="66" r="1.25"/><circle cx="1896.4" cy="66" r="1.25"/>
<circle cx="400.300" cy="66" r="1.250"/><circle cx="405.500" cy="66" r="1.250"/><circle cx="410.700" cy="66" r="1.250"/></g>
<!-- activity: files -->
<g stroke="#1f1f1f" stroke-width="1.8"><path d="M24.8 60.2H31.5L40 68.7V81a2.6 2.6 0 0 1-2.6 2.6H24.8a2.6 2.6 0 0 1-2.6-2.6V62.8a2.6 2.6 0 0 1 2.6-2.6z"/><path d="M31 60.4V66.5a2.5 2.5 0 0 0 2.500 2.500H39.800"/><path d="M18.100 63.800V83.700a3.500 3.500 0 0 0 3.500 3.500H31"/></g>
<circle cx="40" cy="84" r="10" fill="#005fb8" stroke="none"/>
<!-- search -->
<g stroke="#616161" stroke-width="1.7"><circle cx="27.5" cy="131" r="9.4"/><path d="M34.3 138.100L42.300 146.300"/></g>
<!-- scm -->
<g stroke="#616161" stroke-width="1.7"><circle cx="23.3" cy="183.700" r="3.600"/><circle cx="23.3" cy="204.300" r="3.600"/><circle cx="36.700" cy="189" r="3.600"/><path d="M23.3 187.300V200.700M36.700 192.600c0 3.800-2.600 5.400-6.400 5.400H23.300"/></g>
<!-- debug -->
<g stroke="#616161" stroke-width="1.7"><path d="M21.100 251V246.500a2.300 2.300 0 0 1 3.400-2L39.300 251.400a1.800 1.800 0 0 1 0 3.300L31.300 259.800"/><rect x="18.400" y="255.200" width="8.800" height="13.200" rx="4.400"/><path d="M18.800 259H26.800M15.600 256.800L18.500 258.800M15.300 262.400H18.300M15.600 268.100L18.800 266M30 256.800L27.100 258.800M30.300 262.400H27.300M30 268.100L26.800 266"/></g>
<!-- extensions -->
<g stroke="#616161" stroke-width="1.7"><path d="M29.100 315.100H20.100a2.500 2.500 0 0 1-2.500-2.500V306.100a2.500 2.500 0 0 1 2.500-2.500H26.600a2.500 2.500 0 0 1 2.500 2.500V326M17.600 312V323.500a2.500 2.500 0 0 0 2.500 2.500H38.100a2.500 2.500 0 0 0 2.500-2.500V317.600a2.500 2.500 0 0 0-2.500-2.500H29.100"/><rect x="31.700" y="303.200" width="9.400" height="9.400" rx="2" transform="rotate(45 36.400 307.900)"/></g>
<!-- account -->
<g stroke="#616161" stroke-width="1.7"><circle cx="30" cy="903.300" r="12"/></g>
<g fill="#616161" stroke="none"><circle cx="30" cy="897.900" r="3.400"/><path d="M23.400 904.600a1.700 1.700 0 0 1 1.700-1.700H34.900a1.700 1.700 0 0 1 1.700 1.700c0 3.800-3 6.300-6.600 6.300s-6.600-2.500-6.600-6.300z"/></g>
<!-- sidebar chevrons -->
<g stroke="#3b3b3b" stroke-width="1.3"><path d="M66.800 98L72.600 103.800L78.400 98"/><path d="M80.700 122.900L86.500 128.700L80.700 134.500"/><path d="M70 946.100L76.500 952L70 957.900"/><path d="M70 973.800L76.500 979.700L70 985.600"/></g>
<!-- file icons -->
<g stroke="#e37933" stroke-width="1.6" stroke-linecap="butt" stroke-linejoin="miter"><path d="M80.400 151.300L76.200 155.600L80.400 159.900M83.700 151.300L87.900 155.600L83.700 159.900"/><path d="M458 60.700L453.800 65.100L458 69.500M461.400 60.700L465.600 65.100L461.400 69.500"/></g>
<g stroke="#519aba" stroke-width="1.9" stroke-linecap="butt">
<path d="M80.900 205.400L78.700 216.300M86.100 205.400L83.900 216.300M77.300 208.700H88.100M76.500 213H87.300"/>
<path d="M610 59.600L607.800 70.900M615.200 59.600L613 70.900M606.400 63.100H617.200M605.600 67.500H616.400"/>
<path d="M466.100 96.500L463.900 106.800M471.300 96.500L469.100 106.800M462.500 99.700H473.300M461.700 103.700H472.500"/>
</g>
<!-- tab dirty dot -->
<circle cx="717.800" cy="65.900" r="5" fill="#3b3b3b" stroke="none"/>
<!-- breadcrumb chevron + symbol -->
<g stroke="#616161" stroke-width="1.3"><path d="M562.500 96.600L568.300 101.800L562.500 107"/></g>
<g stroke="#d67e00" stroke-width="1.4"><rect x="577.300" y="95.300" width="4.600" height="7.400" rx="0.800" transform="rotate(48 579.600 99)"/><path d="M582.200 100.300H585.500M585.500 100.300V105.200a1 1 0 0 0 1 1H587.800M585.500 100.300H587.800"/><circle cx="589.500" cy="100.300" r="1.700"/><circle cx="589.500" cy="106.200" r="1.700"/></g>
<!-- gear -->
<g stroke="#616161" stroke-width="1.7"><circle cx="30" cy="963" r="3.300"/><path d="M27.600 950.900h4.800l.7 3.500 2.500 1.400 3.400-1.200 2.400 4.200-2.700 2.300v2.900l2.700 2.300-2.400 4.200-3.400-1.200-2.500 1.400-.7 3.500h-4.800l-.7-3.500-2.500-1.400-3.400 1.200-2.400-4.200 2.700-2.300v-2.900l-2.700-2.300 2.400-4.200 3.400 1.200 2.500-1.400z"/></g>
<!-- status bar left -->
<g stroke="#3b3b3b" stroke-width="1.3"><path d="M14 1002.600L19.200 1007.700L14 1012.900M25.600 997.900L20.700 1002.900L25.600 1007.800"/><circle cx="59.900" cy="1005.900" r="8.300"/><path d="M56.300 1002.300L63.500 1009.500M63.500 1002.300L56.300 1009.500"/><path d="M95.700 998L103.800 1012.400H87.600z"/><path d="M95.800 1003V1007.500"/></g>
<circle cx="95.800" cy="1010" r="0.900" fill="#3b3b3b" stroke="none"/>
<!-- status right: copilot + bell -->
<g stroke="none">
<path fill="#3b3b3b" d="M1850 1008.200c0-2 1-3.600 2.600-4.600h15c1.600 1 2.600 2.600 2.600 4.600v2.400c-2.500 2.800-6 4.300-10.100 4.300s-7.600-1.500-10.100-4.300z"/>
<path fill="#f8f8f8" d="M1853.300 1005.600h13.600v5.300c-2 1.500-4.200 2.300-6.800 2.300s-4.800-.8-6.800-2.300z"/>
<rect x="1852.300" y="997.900" width="7.500" height="7.300" rx="3" fill="#f8f8f8" stroke="#3b3b3b" stroke-width="1.700"/>
<rect x="1860.400" y="997.900" width="7.500" height="7.300" rx="3" fill="#f8f8f8" stroke="#3b3b3b" stroke-width="1.700"/>
<path d="M1857.600 1007.600v2.900M1862.600 1007.600v2.900" stroke="#3b3b3b" stroke-width="1.500" stroke-linecap="butt"/>
</g>
<g stroke="#3b3b3b" stroke-width="1.300"><path d="M1893.200 1011.700l2.700-3.500V1003.200a4.600 4.600 0 0 1 5.800-4.700M1904.500 1004.600v3.600l2.700 3.500H1893.200"/><path d="M1898.400 1012.300a2 2 0 0 0 3.600 0"/></g>
<circle cx="1905" cy="1000.800" r="3.600" fill="#3b3b3b" stroke="none"/>
<!-- notification icons -->
<g stroke="#e51400" stroke-width="1.4"><circle cx="1370.300" cy="903.900" r="9.100"/><path d="M1366.300 899.900L1374.300 907.900M1374.300 899.900L1366.300 907.900"/></g>
<g stroke="#3b3b3b" stroke-width="1.3"><path d="M1880.700 898.800L1891.700 909.800M1891.700 898.800L1880.700 909.800"/></g>
<!-- shelf: launcher ring -->
<circle cx="30.600" cy="1050.300" r="8.100" stroke="#111" stroke-width="2.300"/>
<!-- shelf apps -->
<defs>
<linearGradient id="gb" x1="0" y1="0" x2="0" y2="1"><stop offset="0" stop-color="#6787ec"/><stop offset="1" stop-color="#4462d2"/></linearGradient>
<filter id="ds" x="-30%" y="-30%" width="160%" height="170%"><feGaussianBlur in="SourceAlpha" stdDeviation="1.1"/><feOffset dy="1.6"/><feComponentTransfer><feFuncA type="linear" slope="0.38"/></feComponentTransfer><feMerge><feMergeNode/><feMergeNode in="SourceGraphic"/></feMerge></filter>
<clipPath id="c3"><circle cx="1607.300" cy="1049.800" r="20.400"/></clipPath>
<clipPath id="c2"><circle cx="1587.300" cy="1049.800" r="20.400"/></clipPath>
</defs>
<g stroke="none">
<circle cx="889.500" cy="1048.900" r="20.600" fill="url(#gb)" filter="url(#ds)"/>
<path fill="#fff" d="M876 1041.600H885.100L884 1054.300zM888 1041.700L902.800 1041.400L899.100 1049.400zM897.200 1050.500L885.300 1057.400L889.800 1064z"/>
<rect x="886" y="1075.700" width="9" height="1.900" rx="0.900" fill="#5f6373"/>
<circle cx="959.500" cy="1049" r="20.800" fill="#fff" filter="url(#ds)"/>
<path fill="#4285f4" d="M950.400 1038.300a1.500 1.500 0 0 1 .4-1L961.200 1049.200L950.800 1061.100a1.500 1.500 0 0 1-.4-1z"/>
<path fill="#34a853" d="M950.800 1037.300a1.600 1.600 0 0 1 1.900-.3L966.600 1044.700L961.200 1049.200z"/>
<path fill="#ea4335" d="M950.800 1061.100a1.600 1.600 0 0 0 1.900.3L966.600 1053.700L961.200 1049.200z"/>
<path fill="#fbbc04" d="M966.600 1044.700L972.200 1047.800a1.600 1.600 0 0 1 0 2.800L966.600 1053.700L961.200 1049.200z"/>
<rect x="994.700" y="1038.200" width="1" height="24.500" fill="#c3c4d0"/>
<circle cx="1029.400" cy="1049" r="20.700" fill="#fff" filter="url(#ds)"/>
<g stroke="none" transform="translate(1014.700 1034.600) scale(1.431 1.467) translate(-11.800 -11.200)">
<path fill="#009a7c" d="M17.400 18.900L25.200 12.100a.6.600 0 0 1 .9.200L26.100 16.800L20.700 20.800zM12.100 24.400L14.600 22L17.100 23.400L14.100 26.100a.700.700 0 0 1-.9 0L12.100 25.200a.550.550 0 0 1 0-.8z"/>
<path fill="#00b294" d="M12.100 17.300L13.300 16.100a.800.800 0 0 1 1-.100L26.100 25.200V30a.500.500 0 0 1-.8.400z"/>
<path fill="#24bfa5" d="M27.100 11.800a.500.500 0 0 1 .7-.450L31.500 13.400a1.300 1.300 0 0 1 .7 1.150V27.350a1.300 1.300 0 0 1-.7 1.150L27.800 30.550a.500.500 0 0 1-.700-.450z"/>
</g>
<rect x="1022" y="1075.700" width="17" height="1.900" rx="0.900" fill="#1f1f1f"/>
</g>
<!-- tray thumbnails -->
<g stroke="none">
<g clip-path="url(#c3)">
<rect x="1586" y="1029" width="44" height="42" fill="#8b7d68"/>
<rect x="1586" y="1036.300" width="44" height="3" fill="#e6b93a"/>
<rect x="1586" y="1039.300" width="44" height="2.600" fill="#5b3a17"/>
<rect x="1586" y="1041.900" width="44" height="6" fill="#d9cfca"/>
<rect x="1608" y="1042.500" width="16" height="1.500" fill="#f4eeee"/><rect x="1609" y="1045.200" width="17" height="1.300" fill="#9a7a78"/>
<rect x="1586" y="1047.900" width="44" height="8.600" fill="#ead7ae"/>
<rect x="1614" y="1049.600" width="12" height="1.300" fill="#161616"/><rect x="1622" y="1050.900" width="5" height="1.400" fill="#f1cc24"/>
<rect x="1586" y="1056.500" width="44" height="15" fill="#7d7d76"/>
<rect x="1604.500" y="1032.400" width="2" height="2.300" fill="#5a5adf"/>
</g>
<circle cx="1587.300" cy="1049.800" r="20.400" fill="#fdfdfd"/>
<g clip-path="url(#c2)" fill="#3a3a3a" fill-opacity=".75">
<rect x="1579" y="1032.200" width="16" height="1.200"/><rect x="1580" y="1035.500" width="21" height="1.300"/><rect x="1585" y="1039.300" width="16" height="1.300"/><rect x="1587.500" y="1043" width="13.500" height="1.300"/>
<rect x="1587.500" y="1050.500" width="13.500" height="1.200"/><rect x="1585" y="1058" width="21" height="1.300"/><rect x="1582" y="1061.800" width="22" height="1.300"/><rect x="1578" y="1065.600" width="17" height="1.200"/>
</g>
<circle cx="1567.100" cy="1049.800" r="20.400" fill="#f1f1f1"/>
</g>
<!-- IME glyph -->
<g stroke="#1f1f1f" stroke-width="1.500" stroke-linecap="butt">
<path d="M1654 1046.600H1660.200M1657.500 1041.700V1056.400q0 1.300-1.300 1.300H1654.900M1654 1053L1660.600 1050.300"/>
<path d="M1662 1042.300L1663.400 1045.300M1668.700 1042.100L1666.900 1045.300M1661.100 1046.600H1670M1660.300 1051.500H1670.400M1663.300 1046.600V1052.500q0 3.300-2.300 5.400M1667.700 1046.600V1058.200"/>
</g>
<!-- wifi + battery -->
<g stroke="none" fill="#1f1f24">
<path d="M1864.300 1058.700L1854 1046.700a15.100 15.100 0 0 1 20.600 0z"/>
<path d="M1888.300 1041.500h4.900v2.500h.600a1.200 1.200 0 0 1 1.200 1.200v12.500a1.200 1.200 0 0 1-1.200 1.200h-7.600a1.200 1.200 0 0 1-1.200-1.200v-12.500a1.200 1.200 0 0 1 1.200-1.200h2.100z"/>
</g>
<path d="M1858.900 1048.300a8.500 8.500 0 0 1 11 0" stroke="#f0f0f7" stroke-width="0.900" fill="none"/>
<path d="M1885.400 1045.600h9.200" stroke="#f0f0f7" stroke-width="0.500" stroke-opacity=".6" fill="none"/>
<path d="M1895.300 1048.200L1889.300 1056.600H1892.300L1892.900 1061L1896.900 1054.200H1894.200z" fill="#1f1f24" stroke="#f0f0f7" stroke-width="1.200" stroke-linejoin="miter" paint-order="stroke"/>
<path d="M37.700 81.500L40.300 80H41.500V87.400H39.800V82L37.700 83.100z" fill="#fff" stroke="none"/>

</svg>
<div class="abs lay"><div class="t" style="left:53.20px;top:11.00px;font-size:16.25px;font-weight:400;color:#1f1f1f;letter-spacing:-0.070px">File</div>
<div class="t" style="left:98.70px;top:11.00px;font-size:16.25px;font-weight:400;color:#1f1f1f;letter-spacing:-0.063px">Edit</div>
<div class="t" style="left:146.00px;top:11.00px;font-size:16.25px;font-weight:400;color:#1f1f1f;letter-spacing:0.125px">Selection</div>
<div class="t" style="left:233.48px;top:11.00px;font-size:16.25px;font-weight:400;color:#1f1f1f;letter-spacing:-0.100px">View</div>
<div class="t" style="left:289.09px;top:11.00px;font-size:16.25px;font-weight:400;color:#1f1f1f;letter-spacing:0.000px;transform:scaleX(0.9099)">Go</div>
<div class="t" style="left:328.75px;top:11.00px;font-size:16.25px;font-weight:400;color:#1f1f1f;letter-spacing:0.000px;transform:scaleX(0.9500)">Run</div>
<div class="t" style="left:377.13px;top:11.00px;font-size:16.25px;font-weight:400;color:#1f1f1f;letter-spacing:0.153px">Terminal</div>
<div class="t" style="left:459.30px;top:11.00px;font-size:16.25px;font-weight:400;color:#1f1f1f;letter-spacing:0.167px">Help</div>
<div class="t" style="left:950.50px;top:11.00px;font-size:16.25px;font-weight:400;color:#1f1f1f;letter-spacing:-0.016px">pages</div>
<div class="t" style="left:84.40px;top:55.00px;font-size:13.75px;font-weight:400;color:#3b3b3b;letter-spacing:0.000px;transform:scaleX(0.9000)">EXPLORER</div>
<div class="t" style="left:84.97px;top:91.00px;font-size:13.75px;font-weight:700;color:#3b3b3b;letter-spacing:0.000px;transform:scaleX(0.9050)">PAGES</div>
<div class="t" style="left:97.30px;top:118.00px;font-size:16.25px;font-weight:400;color:#3b3b3b;letter-spacing:0.187px">images</div>
<div class="t" style="left:97.27px;top:146.00px;font-size:16.25px;font-weight:400;color:#3b3b3b;letter-spacing:0.000px;transform:scaleX(1.0306)">index.html</div>
<div class="t" style="left:97.88px;top:173.00px;font-size:16.25px;font-weight:400;color:#3b3b3b;letter-spacing:0.000px;transform:scaleX(1.0315)">script.js</div>
<div class="t" style="left:97.90px;top:200.00px;font-size:16.25px;font-weight:400;color:#3b3b3b;letter-spacing:0.127px">styles.css</div>
<div class="t" style="left:85.02px;top:941.00px;font-size:13.75px;font-weight:700;color:#3b3b3b;letter-spacing:0.000px;transform:scaleX(0.9332)">OUTLINE</div>
<div class="t" style="left:85.05px;top:969.00px;font-size:13.75px;font-weight:700;color:#3b3b3b;letter-spacing:0.000px;transform:scaleX(0.9571)">TIMELINE</div>
<div class="t" style="left:75.50px;top:173.00px;font-size:12.3px;font-weight:700;color:#b7b73b;letter-spacing:0.000px;transform:scaleX(0.8873);-webkit-text-stroke:0.35px">JS</div>
<div class="t" style="left:1555.12px;top:1024.00px;font-size:9.5px;font-weight:400;color:#4a4a4a;letter-spacing:-0.074px">polkit</div>
<div class="t" style="left:474.27px;top:55.00px;font-size:16.25px;font-weight:400;color:#868686;letter-spacing:0.000px;transform:scaleX(1.0333)">index.html</div>
<div class="t" style="left:626.60px;top:55.00px;font-size:16.25px;font-weight:400;color:#3b3b3b;letter-spacing:0.116px">styles.css</div>
<div class="t" style="left:483.00px;top:91.00px;font-size:16.25px;font-weight:400;color:#616161;letter-spacing:0.093px">styles.css</div>
<div class="t" style="left:597.50px;top:91.00px;font-size:16.25px;font-weight:400;color:#616161;letter-spacing:0.223px">:root</div>
<div class="t" style="left:74.14px;top:996.00px;font-size:15.5px;font-weight:400;color:#3b3b3b;letter-spacing:0.000px;transform:scaleX(0.8824)">0</div>
<div class="t" style="left:109.73px;top:996.00px;font-size:15.5px;font-weight:400;color:#3b3b3b;letter-spacing:0.000px;transform:scaleX(0.9344)">0</div>
<div class="t" style="left:1487.76px;top:996.00px;font-size:15.5px;font-weight:400;color:#3b3b3b;letter-spacing:0.000px;transform:scaleX(0.9374)">Ln 15, Col 27</div>
<div class="t" style="left:1593.65px;top:996.00px;font-size:15.5px;font-weight:400;color:#3b3b3b;letter-spacing:0.000px;transform:scaleX(0.9501)">Spaces: 4</div>
<div class="t" style="left:1678.59px;top:996.00px;font-size:15.5px;font-weight:400;color:#3b3b3b;letter-spacing:0.000px;transform:scaleX(0.9121)">UTF-8</div>
<div class="t" style="left:1738.16px;top:996.00px;font-size:15.5px;font-weight:400;color:#3b3b3b;letter-spacing:0.000px;transform:scaleX(0.9394)">LF</div>
<div class="t" style="left:1777.01px;top:996.00px;font-size:15.5px;font-weight:400;color:#3b3b3b;letter-spacing:0.000px;transform:scaleX(1.0972)">{ }</div>
<div class="t" style="left:1802.62px;top:996.00px;font-size:15.5px;font-weight:400;color:#3b3b3b;letter-spacing:0.000px;transform:scaleX(0.8736)">CSS</div>
<div class="t" style="left:1387.00px;top:894.00px;font-size:16.25px;font-weight:400;color:#3b3b3b;letter-spacing:0.012px">Failed to save &#x27;styles.css&#x27;: No polkit authentication agent found.</div>
<div class="t" style="left:1676.02px;top:939.00px;font-size:16.25px;font-weight:400;color:#ffffff;letter-spacing:0.000px;transform:scaleX(0.8792)">Retry</div>
<div class="t" style="left:1744.49px;top:939.00px;font-size:16.25px;font-weight:400;color:#3b3b3b;letter-spacing:0.000px;transform:scaleX(0.9106)">Save As...</div>
<div class="t" style="left:1844.10px;top:939.00px;font-size:16.25px;font-weight:400;color:#3b3b3b;letter-spacing:0.000px;transform:scaleX(0.8951)">Revert</div>
<div class="t" style="left:771.40px;top:1040.00px;font-size:16.2px;font-weight:400;color:#1f1f1f;letter-spacing:0.151px">Desk 1</div>
<div class="t" style="left:1709.40px;top:1041.00px;font-size:16.8px;font-weight:400;color:#1f1f1f;letter-spacing:0.214px;-webkit-text-stroke:0.45px">Feb 28</div>
<div class="t" style="left:1800.48px;top:1041.00px;font-size:16.8px;font-weight:400;color:#1f1f1f;letter-spacing:0.000px;transform:scaleX(1.0508);-webkit-text-stroke:0.45px">09:05</div></div>
</body></html>
